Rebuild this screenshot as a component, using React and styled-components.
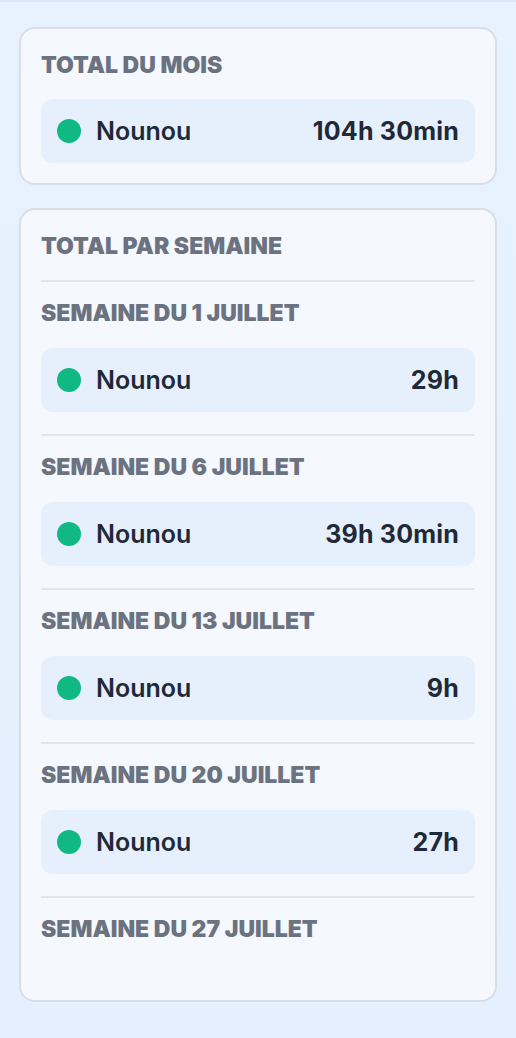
import React from 'react'
import styled, { createGlobalStyle } from 'styled-components'

const GlobalStyle = createGlobalStyle`
  html, body {
    margin: 0;
    padding: 0;
    background: #e8f1fe;
    font-family: Inter, "Noto Sans", sans-serif;
  }
`;

const Page = styled.div`
  min-height: 1038px;
  box-sizing: border-box;
  border-top: 2px solid #dce7fb;
  background: linear-gradient(180deg, #e8f2fe 0%, #e6effd 100%);
  padding: 25px 19px 24px;
  display: flex;
  flex-direction: column;
  gap: 23px;
`;

const Card = styled.section`
  background: #f5f8fe;
  border: 2px solid #d9dee6;
  border-radius: 16px;
  padding: 22px 20px ${(p) => p.$bottom || 20}px;
`;

const Title = styled.h2`
  margin: 0;
  font-size: 23px;
  line-height: 28px;
  font-weight: 900;
  letter-spacing: 0;
  color: #6b7280;
  text-transform: uppercase;
`;

const Week = styled.div`
  border-top: 2px solid #e3e6eb;
  padding: 17px 0 22px;
  margin-top: ${(p) => (p.$first ? 20 : 0)}px;
  display: flex;
  flex-direction: column;
  gap: 21px;
`;

const Row = styled.div`
  display: flex;
  align-items: center;
  height: 64px;
  padding: 0 16px;
  border-radius: 12px;
  background: #e6f0fd;
  margin-top: ${(p) => p.$top || 0}px;
`;

const Dot = styled.span`
  width: 24px;
  height: 24px;
  border-radius: 50%;
  background: #10b981;
  flex: none;
  margin-right: 15px;
`;

const Name = styled.span`
  flex: 1;
  font-size: 25px;
  font-weight: 600;
  color: #1f2937;
`;

const Hours = styled.span`
  font-size: 25px;
  font-weight: 700;
  letter-spacing: 0.2px;
  color: #1f2937;
`;

const weeks = [
  { label: 'Semaine du 1 juillet', hours: '29h' },
  { label: 'Semaine du 6 juillet', hours: '39h 30min' },
  { label: 'Semaine du 13 juillet', hours: '9h' },
  { label: 'Semaine du 20 juillet', hours: '27h' },
  { label: 'Semaine du 27 juillet', hours: null },
];

function Entry({ hours, top }) {
  return (
    <Row $top={top}>
      <Dot />
      <Name>Nounou</Name>
      <Hours>{hours}</Hours>
    </Row>
  )
}

export default function App() {
  return (
    <>
      <GlobalStyle />
      <Page>
        <Card>
          <Title>Total du mois</Title>
          <Entry hours="104h 30min" top={20} />
        </Card>

        <Card $bottom={35}>
          <Title>Total par semaine</Title>
          {weeks.map((w, i) => (
            <Week key={w.label} $first={i === 0}>
              <Title>{w.label}</Title>
              {w.hours && <Entry hours={w.hours} />}
            </Week>
          ))}
        </Card>
      </Page>
    </>
  )
}
